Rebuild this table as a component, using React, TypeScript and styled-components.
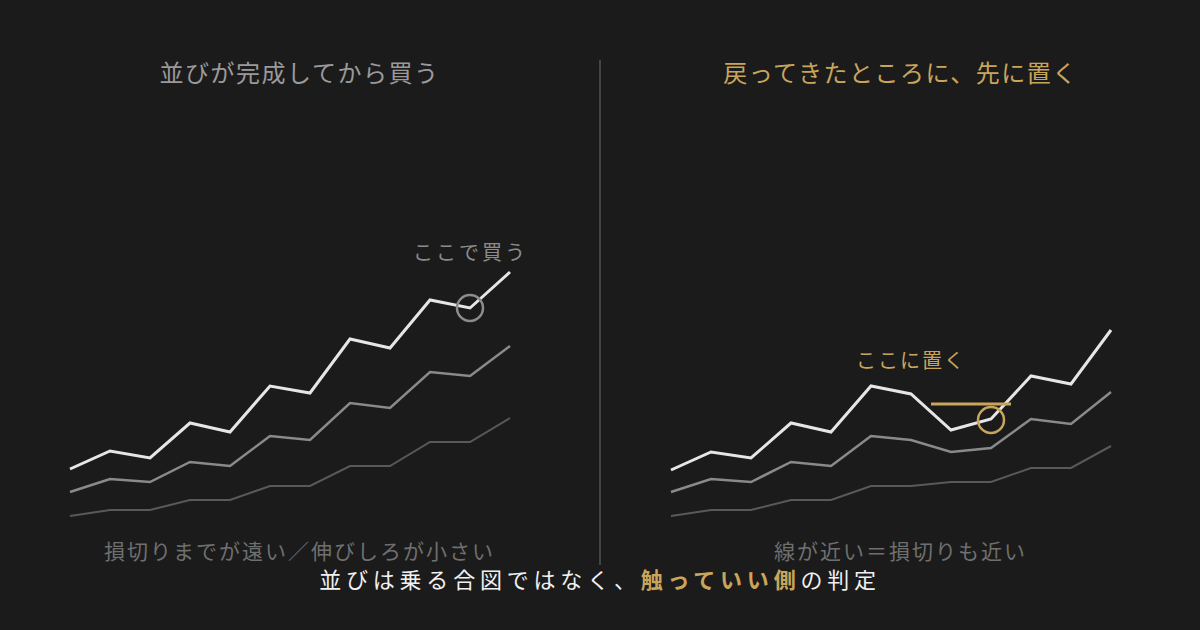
import React from "react";
import styled, { createGlobalStyle } from "styled-components";

const GlobalStyle = createGlobalStyle`
  html, body {
    margin: 0;
    padding: 0;
    background: #1b1b1b;
  }
  body {
    font-family: "Noto Sans CJK JP", "Noto Sans", sans-serif;
  }
`;

const GOLD = "#c9a55b";

const Page = styled.div`
  width: 1200px;
  height: 630px;
  background: #1b1b1b;
  padding-top: 60px;
  box-sizing: border-box;
  overflow: hidden;
`;

const Panels = styled.div`
  display: grid;
  grid-template-columns: 599px 2px 599px;
  height: 505px;
`;

const Divider = styled.div`
  background: #444444;
`;

const Panel = styled.section`
  display: flex;
  flex-direction: column;
  align-items: center;
`;

const Title = styled.h2<{ $accent?: boolean }>`
  margin: 0;
  font-size: 24px;
  line-height: 24px;
  font-weight: 400;
  letter-spacing: 1.5px;
  color: ${(p) => (p.$accent ? GOLD : "#9a9a9a")};
`;

const Chart = styled.svg`
  display: block;
  width: 599px;
  height: 451px;
`;

const Caption = styled.p`
  margin: 3px 0 0;
  font-size: 21px;
  line-height: 24px;
  letter-spacing: 2px;
  color: #6f6f6f;
`;

const Footer = styled.p`
  margin: 0;
  text-align: center;
  font-size: 22px;
  line-height: 26px;
  letter-spacing: 4.8px;
  color: #f0f0f0;
`;

const Strong = styled.span`
  color: ${GOLD};
  font-weight: 700;
`;

type Pt = [number, number];

const xs = [70, 110, 150, 190, 230, 270, 310, 350, 390, 430, 470, 510];
const TOP = 84;

function toPoints(ys: number[]) {
  return ys.map((y, i) => `${xs[i]},${y - TOP}`).join(" ");
}

const leftLines = {
  high: [469, 451, 458, 423, 432, 386, 393, 339, 348, 300, 308, 272],
  mid: [492, 479, 482, 462, 466, 436, 440, 403, 408, 372, 376, 346],
  low: [516, 510, 510, 500, 500, 486, 486, 466, 466, 442, 442, 418],
};

const rightLines = {
  high: [470, 452, 458, 423, 432, 386, 394, 430, 419, 376, 384, 330],
  mid: [492, 479, 482, 462, 466, 436, 440, 452, 448, 419, 424, 392],
  low: [516, 510, 510, 500, 500, 486, 486, 482, 482, 468, 468, 446],
};

interface LinesProps {
  lines: { high: number[]; mid: number[]; low: number[] };
}

function Lines({ lines }: LinesProps) {
  return (
    <g fill="none" strokeLinejoin="miter">
      <polyline points={toPoints(lines.low)} stroke="#595959" strokeWidth={2} />
      <polyline points={toPoints(lines.mid)} stroke="#8a8a8a" strokeWidth={2.5} />
      <polyline points={toPoints(lines.high)} stroke="#e6e6e6" strokeWidth={3} />
    </g>
  );
}

const labelFont = '"Noto Sans CJK JP", "Noto Sans", sans-serif';

function BuyChart() {
  const mark: Pt = [470, 308 - TOP];
  return (
    <Chart viewBox="0 0 599 451">
      <Lines lines={leftLines} />
      <circle cx={mark[0]} cy={mark[1]} r={13} fill="none" stroke="#8c8c8c" strokeWidth={2.5} />
      <text
        x={528}
        y={260 - TOP}
        textAnchor="end"
        fontFamily={labelFont}
        fontSize={20}
        letterSpacing={3}
        fill="#8c8c8c"
      >
        ここで買う
      </text>
    </Chart>
  );
}

function PlaceChart() {
  return (
    <Chart viewBox="0 0 599 451">
      <Lines lines={rightLines} />
      <line x1={330} y1={404 - TOP} x2={410} y2={404 - TOP} stroke={GOLD} strokeWidth={3} />
      <circle cx={390} cy={420 - TOP} r={13} fill="none" stroke={GOLD} strokeWidth={2.5} />
      <text
        x={255}
        y={368 - TOP}
        fontFamily={labelFont}
        fontSize={20}
        letterSpacing={2}
        fill={GOLD}
      >
        ここに置く
      </text>
    </Chart>
  );
}

export default function App() {
  return (
    <>
      <GlobalStyle />
      <Page>
        <Panels>
          <Panel>
            <Title>並びが完成してから買う</Title>
            <BuyChart />
            <Caption>損切りまでが遠い／伸びしろが小さい</Caption>
          </Panel>
          <Divider />
          <Panel>
            <Title $accent>戻ってきたところに、先に置く</Title>
            <PlaceChart />
            <Caption>線が近い＝損切りも近い</Caption>
          </Panel>
        </Panels>
        <Footer>
          並びは乗る合図ではなく、<Strong>触っていい側</Strong>の判定
        </Footer>
      </Page>
    </>
  );
}
